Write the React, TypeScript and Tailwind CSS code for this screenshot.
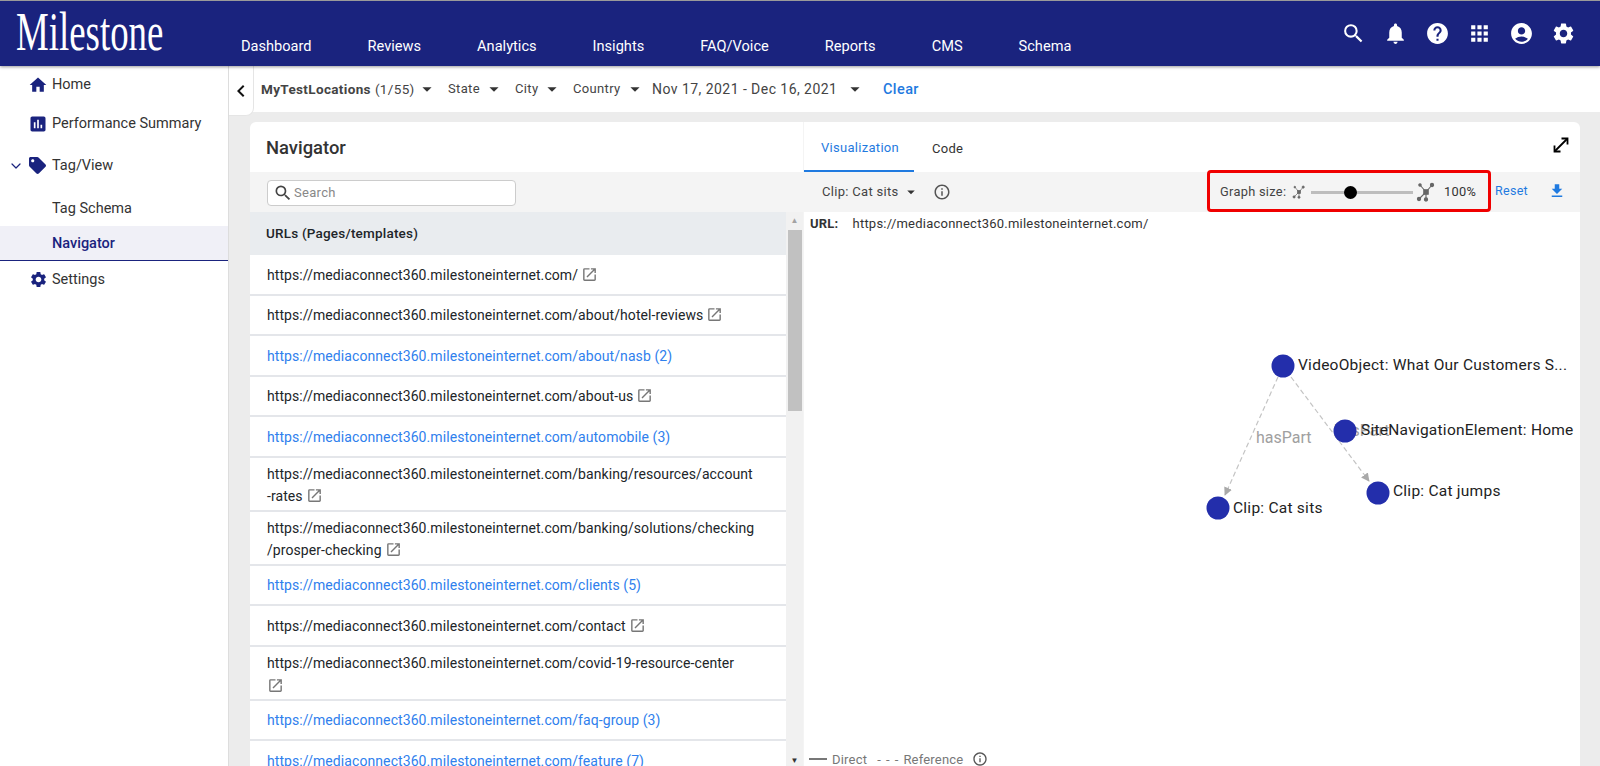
import React from "react";
import {
  MdSearch, MdNotifications, MdHelp, MdApps, MdAccountCircle, MdSettings, MdHome, MdAssessment,
  MdOpenInNew, MdArrowDropDown, MdInfoOutline, MdFileDownload, MdChevronLeft,
} from "react-icons/md";
import { FaTag } from "react-icons/fa";
import { ChevronDown } from "lucide-react";

const B = "https://mediaconnect360.milestoneinternet.com/";

function Ext({ flush }: { flush?: boolean }) {
  return <MdOpenInNew className={"inline-block text-[#777] align-[-3px] " + (flush ? "" : "ml-[3px]")} size={17} />;
}

type Row = { l: string; l2?: string; link?: boolean; ext?: boolean; tall?: boolean };
const rows: Row[] = [
  { l: B, ext: true },
  { l: B + "about/hotel-reviews", ext: true },
  { l: B + "about/nasb (2)", link: true },
  { l: B + "about-us", ext: true },
  { l: B + "automobile (3)", link: true },
  { l: B + "banking/resources/account", l2: "-rates", ext: true, tall: true },
  { l: B + "banking/solutions/checking", l2: "/prosper-checking", ext: true, tall: true },
  { l: B + "clients (5)", link: true },
  { l: B + "contact", ext: true },
  { l: B + "covid-19-resource-center", l2: "", ext: true, tall: true },
  { l: B + "faq-group (3)", link: true },
  { l: B + "feature (7)", link: true },
];

function GraphIcon({ big }: { big?: boolean }) {
  const s = big ? 20 : 14;
  return (
    <svg width={s} height={s} viewBox="0 0 20 20" fill="#666" stroke="#666" strokeWidth={big ? 1.1 : 1}>
      <path d="M10 10 4 3M10 10 16 3M10 10 3 17M10 10 10 17" />
      <rect x="7.8" y="7.8" width="4.4" height="4.4" />
      <circle cx="4" cy="3" r="1.2" /><circle cx="16" cy="3" r="1.6" />
      <circle cx="3" cy="17" r="1.6" /><circle cx="10" cy="17.5" r="1.6" />
    </svg>
  );
}

function Expand() {
  return (
    <svg width="18" height="18" viewBox="0 0 18 18" fill="none" stroke="#000" strokeWidth="1.8">
      <path d="M3 15 15 3" />
      <path d="M9.5 2.5H15.5V8.5" />
      <path d="M2.5 9.5V15.5H8.5" />
    </svg>
  );
}

function Filter({ children, cls, caret }: { children: React.ReactNode; cls: string; caret: string }) {
  return (
    <span className={"flex items-center text-[13px] tracking-[0.35px] text-[#444] " + cls}>
      {children}
      <MdArrowDropDown size={22} className={"text-[#333] " + caret} />
    </span>
  );
}

export default function App() {
  return (
    <div className="h-[766px] w-[1600px] overflow-hidden flex flex-col bg-white text-[#212529] font-['Roboto',sans-serif]">
      <header className="h-[66px] shrink-0 bg-[#1a237e] border-t border-[#9a9a9a] flex relative z-10 shadow-[0_1px_3px_rgba(0,0,0,0.4)]">
        <div className="w-[241px] shrink-0 pl-[16px] overflow-visible">
          <span className="block origin-left scale-x-[0.67] text-white font-['Liberation_Serif',serif] text-[55px] leading-[62px] whitespace-nowrap">Milestone</span>
        </div>
        <nav className="flex gap-[56px] text-white text-[14.6px] pt-[35px] leading-[20px]">
          {["Dashboard", "Reviews", "Analytics", "Insights", "FAQ/Voice", "Reports", "CMS", "Schema"].map((t) => (
            <span key={t}>{t}</span>
          ))}
        </nav>
        <div className="ml-auto flex gap-[17px] pr-[24px] pt-[20px] text-white h-fit">
          <MdSearch size={25} /><MdNotifications size={25} /><MdHelp size={25} /><MdApps size={25} /><MdAccountCircle size={25} /><MdSettings size={25} />
        </div>
      </header>

      <div className="flex flex-1 min-h-0">
        <aside className="w-[229px] shrink-0 border-r border-[#ddd] text-[14.5px] text-[#333] bg-white">
          <div className="h-[39px] flex items-center pl-[28px] gap-[4px] pb-[2px]"><MdHome size={20} className="text-[#1a237e]" />Home</div>
          <div className="h-[37px] flex items-center pl-[28px] gap-[4px]"><MdAssessment size={20} className="text-[#1a237e]" />Performance Summary</div>
          <div className="h-[47px] flex items-center pl-[8px]">
            <ChevronDown size={16} strokeWidth={1.8} className="text-[#1a237e]" />
            <FaTag size={17} className="text-[#1a237e] ml-[5px] mr-[6px]" />Tag/View
          </div>
          <div className="h-[37px] flex items-center pl-[52px] pt-[2px]">Tag Schema</div>
          <div className="h-[35px] flex items-center pl-[52px] pt-[2px] bg-[#f0f0f7] border-b border-[#1a237e] text-[#1a237e] font-medium">Navigator</div>
          <div className="h-[37px] flex items-center pl-[29px] gap-[4px]"><MdSettings size={19} className="text-[#1a237e]" />Settings</div>
        </aside>

        <main className="flex-1 min-w-0 bg-[#ececec] flex flex-col">
          <div className="h-[46px] shrink-0 bg-white flex items-center relative">
            <div className="w-[25px] h-[50px] self-start bg-white border-r border-b border-[#e5e5e5] rounded-br-lg flex items-center justify-center">
              <MdChevronLeft size={28} className="text-[#111]" />
            </div>
            <Filter cls="ml-[7px] w-[187px]" caret="ml-[1px]"><span className="font-bold text-[13.5px]">MyTestLocations</span><span className="ml-[4px] text-[13.5px]">(1/55)</span></Filter>
            <Filter cls="w-[67px]" caret="ml-[3px]">State</Filter>
            <Filter cls="w-[58px]" caret="ml-[3px]">City</Filter>
            <Filter cls="w-[79px]" caret="ml-[3px]">Country</Filter>
            <Filter cls="w-[231px] !text-[14px] !tracking-[0.45px]" caret="ml-[7px]">Nov 17, 2021 - Dec 16, 2021</Filter>
            <span className="text-[14.5px] font-medium text-[#1f7ae0] tracking-[0.4px] pt-[2px]">Clear</span>
          </div>

          <div className="flex-1 min-h-0 pl-[21px] pr-[20px] pt-[10px]">
            <div className="h-[700px] flex bg-white rounded-t-md">
              <section className="w-[553px] shrink-0 flex flex-col">
                <h2 className="h-[50px] shrink-0 flex items-center pl-[16px] pt-[2px] text-[18.4px] font-medium text-[#333]">Navigator</h2>
                <div className="h-[40px] shrink-0 bg-[#f4f4f4] flex items-center pl-[17px] pt-[2px]">
                  <div className="w-[249px] h-[26px] bg-white border border-[#ccc] rounded flex items-center pl-[5px] gap-[1px] text-[13px] text-[#888] tracking-[0.3px]">
                    <MdSearch size={20} className="text-[#444]" />Search
                  </div>
                </div>
                <div className="flex flex-1 min-h-0">
                  <div className="w-[536px] shrink-0">
                    <div className="h-[43px] bg-[#e9ecef] flex items-center pl-[16px] text-[13.5px] font-medium tracking-[0.2px]">URLs (Pages/templates)</div>
                    {rows.map((r) => (
                      <div key={r.l} className={"pl-[17px] border-b-2 border-[#e4e6ea] text-[14px] tracking-[0.08px] " + (r.tall ? "h-[54px] pt-[6px] leading-[21px]" : "h-[40.5px] flex items-center pt-[2px]")}>
                        {r.link ? (
                          <span className="text-[#2f80ed]">{r.l}</span>
                        ) : r.l2 === undefined ? (
                          <span>{r.l}<Ext /></span>
                        ) : (
                          <>
                            <div>{r.l}</div>
                            <div className={r.l2 === "" ? "mt-[2px]" : "mt-[1px]"}>{r.l2}<Ext flush={r.l2 === ""} /></div>
                          </>
                        )}
                      </div>
                    ))}
                  </div>
                  <div className="w-[17px] shrink-0 bg-[#f1f1f1] flex flex-col items-center h-[554px]">
                    <div className="h-[18px] w-full flex items-center justify-center text-[#a3a3a3] text-[8px]">▲</div>
                    <div className="w-[14px] h-[181px] bg-[#c1c1c1]" />
                    <div className="mt-auto h-[10px] text-[#333] text-[8px] leading-[10px]">▼</div>
                  </div>
                </div>
              </section>

              <div className="w-[1px] shrink-0 bg-[#f4f4f4]" />

              <section className="flex-1 min-w-0 flex flex-col">
                <div className="h-[50px] shrink-0 flex relative text-[13px] tracking-[0.3px]">
                  <div className="w-[110px] border-b-2 border-[#1f7ae0] flex items-center justify-center text-[#1f7ae0] pt-[4px] pl-[2px]">Visualization</div>
                  <div className="ml-[18px] flex items-center text-[#333] pt-[3px]">Code</div>
                  <span className="absolute right-[10px] top-[14px]"><Expand /></span>
                </div>
                <div className="h-[40px] shrink-0 bg-[#f4f4f4] flex items-center text-[13px] tracking-[0.3px] text-[#444]">
                  <span className="ml-[18px] flex items-center">Clip: Cat sits<MdArrowDropDown size={18} className="ml-[3px] text-[#333]" /></span>
                  <MdInfoOutline size={18} className="ml-[13px] text-[#555]" />
                  <div className="ml-auto w-[284px] h-[42px] -mt-[2px] border-[3px] border-[#f00000] rounded-sm flex items-center pl-[10px] pt-[2px] text-[#333] text-[12.8px]">
                    <span className="w-[72px] text-[#444]">Graph size:</span>
                    <GraphIcon />
                    <div className="ml-[5px] w-[102px] h-[3px] bg-[#bdbdbd] relative">
                      <span className="absolute left-[33px] -top-[5px] w-[13px] h-[13px] rounded-full bg-black" />
                    </div>
                    <span className="ml-[3px]"><GraphIcon big /></span>
                    <span className="ml-[8px]">100%</span>
                  </div>
                  <span className="ml-[4px] text-[#1f7ae0] text-[12.5px] -mt-[1px]">Reset</span>
                  <MdFileDownload size={18} className="ml-[20px] mr-[14px] -mt-[2px] text-[#1f7ae0]" />
                </div>
                <div className="flex-1 min-h-0 relative h-[554px] flex flex-col">
                  <div className="text-[13px] tracking-[0.23px] pl-[6px] pt-[2px] flex gap-[14px] text-[#333]">
                    <span className="font-bold">URL:</span><span>{B}</span>
                  </div>
                  <svg className="absolute left-0 top-0" width="776" height="540" viewBox="804 212 776 540" fontFamily="Roboto, sans-serif">
                    <defs>
                      <marker id="a" viewBox="0 0 10 10" refX="9" refY="5" markerWidth="7" markerHeight="7" orient="auto">
                        <path d="M0 0 10 5 0 10Z" fill="#a9a9a9" />
                      </marker>
                    </defs>
                    <g stroke="#c4c4c4" strokeWidth="1.2" strokeDasharray="5 3" fill="none">
                      <path d="M1278 377 1225 495" markerEnd="url(#a)" />
                      <path d="M1291 377 1369 481" markerEnd="url(#a)" />
                    </g>
                    <g fontSize="16" fill="#a0a0a0">
                      <text x="1256" y="443">hasPart</text>
                      <text x="1334" y="436">hasPart</text>
                    </g>
                    <g fill="#232eab">
                      <circle cx="1283" cy="366" r="11.5" />
                      <circle cx="1345" cy="431" r="11.5" />
                      <circle cx="1378" cy="493" r="11.5" />
                      <circle cx="1218" cy="508" r="11.5" />
                    </g>
                    <g fontSize="15.5" fill="#222" letterSpacing="0.25">
                      <text x="1298" y="370">VideoObject: What Our Customers S...</text>
                      <text x="1361" y="435">SiteNavigationElement: Home</text>
                      <text x="1393" y="496">Clip: Cat jumps</text>
                      <text x="1233" y="513">Clip: Cat sits</text>
                    </g>
                  </svg>
                  <div className="mt-[516px] shrink-0 flex items-center pl-[5px] text-[13px] text-[#777] tracking-[0.2px]">
                    <span className="w-[18px] h-[2px] bg-[#777] mr-[5px]" />Direct
                    <span className="ml-[10px] mr-[4px] tracking-[1px]">- - -</span>Reference
                    <MdInfoOutline size={16} className="ml-[9px] text-[#555]" />
                  </div>
                </div>
              </section>
            </div>
          </div>
        </main>
      </div>
    </div>
  );
}
